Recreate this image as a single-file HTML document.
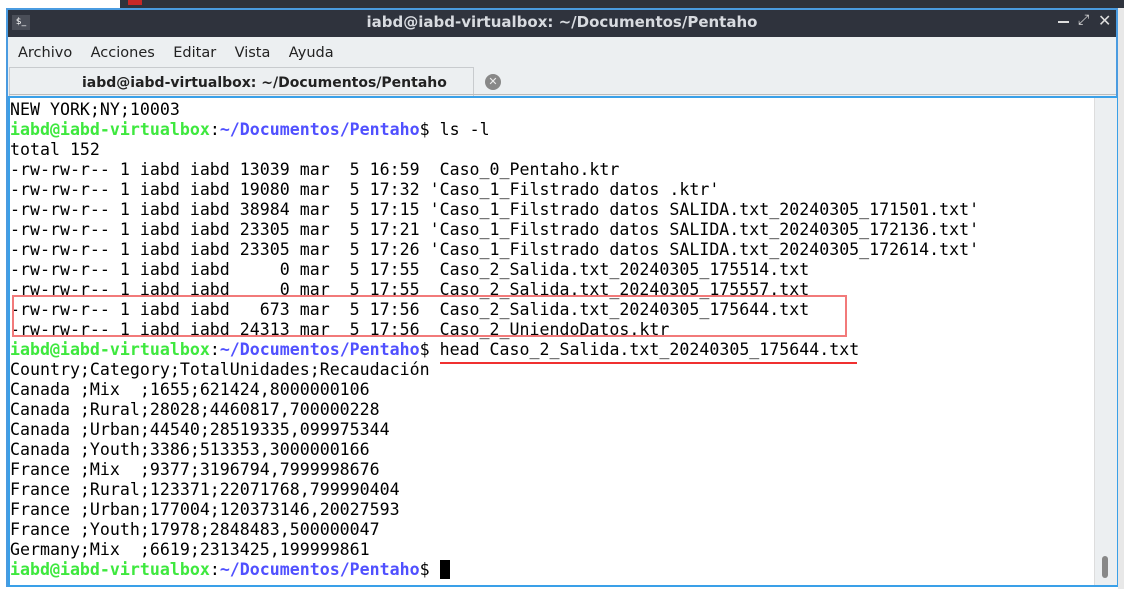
<!DOCTYPE html><html><head><style>
body{margin:0;width:1124px;height:589px;overflow:hidden;background:#fff;position:relative;font-family:"DejaVu Sans",sans-serif}
.a{position:absolute}
pre{margin:0;font-family:"DejaVu Sans Mono",monospace;font-size:16.6px;line-height:20px;color:#000}
.g{color:#3ee83e;font-weight:bold}.b{color:#5050ff;font-weight:bold}
</style></head><body>
<div class="a" style="left:120px;top:0;width:1004px;height:8px;background:#2f333d"></div>
<div class="a" style="left:128px;top:0;width:14px;height:5px;background:#c62828"></div>
<div class="a" style="left:6px;top:8px;width:1112px;height:579px;background:#eceff1;border:2px solid #4a9be0;box-sizing:border-box"></div>
<div class="a" style="left:8px;top:10px;width:1108px;height:27px;background:#2f333d"></div>
<div class="a" style="left:12px;top:15px;width:18px;height:15px;background:#4a4e58;color:#fff;font-size:9px;line-height:15px;text-align:center">$_</div>
<div class="a" style="left:0;top:12px;width:1124px;text-align:center;color:#d8dbe0;font-weight:bold;font-size:15px;line-height:20px">iabd@iabd-virtualbox: ~/Documentos/Pentaho</div>
<div class="a" style="left:1058px;top:21px;width:11px;height:2px;background:#ddd"></div>
<div class="a" style="left:1078px;top:12px;color:#ddd;font-size:14px">⤢</div>
<div class="a" style="left:1098px;top:11px;color:#ddd;font-size:16px;font-weight:bold">✕</div>
<div class="a" style="left:18px;top:45px;font-size:14.5px;color:#222;word-spacing:0">Archivo&nbsp;&nbsp;&nbsp;&nbsp;Acciones&nbsp;&nbsp;&nbsp;&nbsp;Editar&nbsp;&nbsp;&nbsp;&nbsp;Vista&nbsp;&nbsp;&nbsp;&nbsp;Ayuda</div>
<div class="a" style="left:9px;top:67px;width:465px;height:30px;background:#eceff1;border:1px solid #c8cbce;border-bottom:none;box-sizing:border-box"></div>
<div class="a" style="left:9px;top:94px;width:1107px;height:1px;background:#bbb"></div>
<div class="a" style="left:82px;top:75px;font-size:14px;font-weight:bold;color:#222">iabd@iabd-virtualbox: ~/Documentos/Pentaho</div>
<div class="a" style="left:485px;top:74px;width:16px;height:16px;border-radius:50%;background:#888;color:#eee;font-size:11px;line-height:16px;text-align:center">✕</div>
<div class="a" style="left:8px;top:96px;width:1110px;height:491px;background:#fff;border:2px solid #3aa0e8;box-sizing:border-box"></div>
<div class="a" style="left:1094px;top:98px;width:22px;height:487px;background:#eceff1;border-left:1px solid #ddd"></div>
<div class="a" style="left:1102px;top:556px;width:6px;height:22px;border-radius:3px;background:#888"></div>
<pre class="a" style="left:10px;top:100px">NEW YORK;NY;10003
<span class="g">iabd@iabd-virtualbox</span>:<span class="b">~/Documentos/Pentaho</span>$ ls -l
total 152
-rw-rw-r-- 1 iabd iabd 13039 mar  5 16:59  Caso_0_Pentaho.ktr
-rw-rw-r-- 1 iabd iabd 19080 mar  5 17:32 'Caso_1_Filstrado datos .ktr'
-rw-rw-r-- 1 iabd iabd 38984 mar  5 17:15 'Caso_1_Filstrado datos SALIDA.txt_20240305_171501.txt'
-rw-rw-r-- 1 iabd iabd 23305 mar  5 17:21 'Caso_1_Filstrado datos SALIDA.txt_20240305_172136.txt'
-rw-rw-r-- 1 iabd iabd 23305 mar  5 17:26 'Caso_1_Filstrado datos SALIDA.txt_20240305_172614.txt'
-rw-rw-r-- 1 iabd iabd     0 mar  5 17:55  Caso_2_Salida.txt_20240305_175514.txt
-rw-rw-r-- 1 iabd iabd     0 mar  5 17:55  Caso_2_Salida.txt_20240305_175557.txt
-rw-rw-r-- 1 iabd iabd   673 mar  5 17:56  Caso_2_Salida.txt_20240305_175644.txt
-rw-rw-r-- 1 iabd iabd 24313 mar  5 17:56  Caso_2_UniendoDatos.ktr
<span class="g">iabd@iabd-virtualbox</span>:<span class="b">~/Documentos/Pentaho</span>$ head Caso_2_Salida.txt_20240305_175644.txt
Country;Category;TotalUnidades;Recaudación
Canada ;Mix  ;1655;621424,8000000106
Canada ;Rural;28028;4460817,700000228
Canada ;Urban;44540;28519335,099975344
Canada ;Youth;3386;513353,3000000166
France ;Mix  ;9377;3196794,7999998676
France ;Rural;123371;22071768,799990404
France ;Urban;177004;120373146,20027593
France ;Youth;17978;2848483,500000047
Germany;Mix  ;6619;2313425,199999861
<span class="g">iabd@iabd-virtualbox</span>:<span class="b">~/Documentos/Pentaho</span>$ <span style="background:#000">&nbsp;</span></pre>
<div class="a" style="left:12px;top:295px;width:835px;height:42px;border:2px solid #f27a7a;box-sizing:border-box"></div>
<div class="a" style="left:440px;top:362px;width:417px;height:2px;background:#f03030"></div>
<div class="a" style="left:1118px;top:8px;width:6px;height:581px;background:#e8e8e8"></div>
</body></html>
